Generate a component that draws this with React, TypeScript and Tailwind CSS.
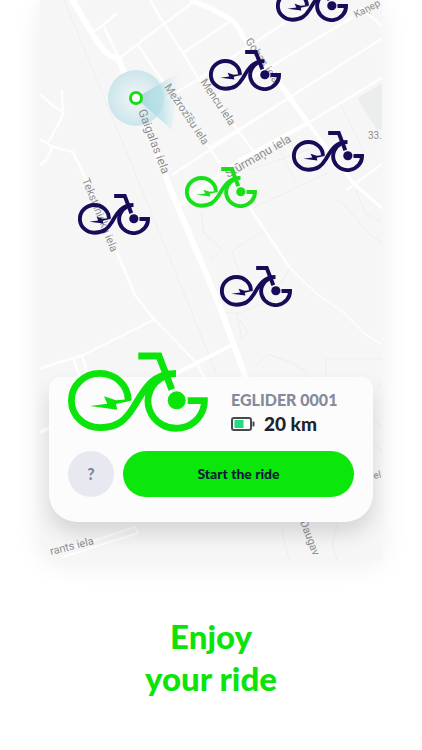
type BikeProps = {
  className?: string;
  x?: number;
  y?: number;
  width?: number;
  height?: number;
  strokeWidth?: number;
};

function Bike(props: BikeProps) {
  return (
    <svg viewBox="0 0 140 80" fill="none" stroke="currentColor" strokeWidth={6.8} aria-hidden="true" {...props}>
      <path d="M60.2 48A28.4 27.1 0 1 0 31.8 75.6C50 75.6 57.500 68 66 54.500C77 36 85 21.500 108 21.500" />
      <path d="M119.700 48.700H136.400A28.200 27.200 0 1 1 95 25" />
      <path d="M70.300 4H91L103.800 37.500" />
      <path d="M101 18 86 29 97 28Z" fill="currentColor" stroke="none" />
      <circle cx="108.700" cy="48.300" r="9" fill="currentColor" stroke="none" />
      <path d="M22 54 39.300 51.700 36 44.300 48 48.200 63 47 63 48.800 48 52 49.300 57.700Z" fill="currentColor" stroke="none" />
    </svg>
  );
}

const navyBikes = [
  [276, -19],
  [209, 50],
  [292, 131],
  [78, 194],
  [220, 266],
];

const streets: { name: string; x: number; y: number; angle: number; size: number }[] = [
  { name: "Gaigalas iela", x: 138, y: 111, angle: 69, size: 12 },
  { name: "Mežrozīšu iela", x: 164, y: 87, angle: 56, size: 11 },
  { name: "Mencu iela", x: 200, y: 82, angle: 56, size: 11 },
  { name: "Gobas iela", x: 245, y: 41, angle: 56, size: 11 },
  { name: "Stūrmaņu iela", x: 228, y: 178, angle: -30, size: 12 },
  { name: "Kaņep", x: 356, y: 18, angle: -27, size: 10 },
  { name: "Tekstilnieku iela", x: 82, y: 180, angle: 68, size: 11 },
  { name: "33.", x: 368, y: 139, angle: 0, size: 10 },
  { name: "el", x: 374, y: 479, angle: -12, size: 10 },
  { name: "Daugav", x: 300, y: 522, angle: 69, size: 11 },
  { name: "rants iela", x: 51, y: 555, angle: -14, size: 11 },
];

function CityMap() {
  return (
    <svg
      viewBox="40 0 342 560"
      preserveAspectRatio="xMidYMin slice"
      className="absolute inset-0 h-full w-full"
      role="img"
      aria-label="Map of nearby bikes"
    >
      <defs>
        <radialGradient id="halo">
          <stop offset="0" stopColor="#f3f5f8" />
          <stop offset="1" stopColor="#cbe6eb" />
        </radialGradient>
        <linearGradient id="beam">
          <stop offset="0" stopColor="#9dd3dc" stopOpacity="0.9" />
          <stop offset="0.6" stopColor="#b5dfe6" stopOpacity="0.7" />
          <stop offset="1" stopColor="#d5eef2" stopOpacity="0" />
        </linearGradient>
      </defs>
      <rect x="40" width="342" height="560" fill="#f6f6f6" />
      <path d="M357 98 383 83V130H377Z" fill="#eceeee" />

      <g fill="none" stroke="#eeeeee" strokeWidth="1">
        <path d="M64 0 138 180 216 372" />
        <path d="M341 105 364 152M275 140 297 184M250 170 310 149M255 207 330 172" />
        <path d="M263 231 232 251 240 275M201 213 204 233 222 249 210 260M290 268 280 284" />
        <path d="M338 201 345 205 370 235 383 243M356 190 365 213 383 223" />
        <path d="M225 313 240 313 271 300M237 314 242 340 248 332 240 320M254 367 268 354 290 362 306 371V378H344M326 376V359L383 359" />
        <path d="M378 390 383 380M373 420 383 428M372 443 383 451M281 526 289 560M338 522 332 545 337 560" />
      </g>

      <g fill="none" stroke="#fefefe" strokeWidth="2.5" strokeLinejoin="round">
        <path d="M92 33 103 25 117 13M103 25 120 60M193 2 118 59" />
        <path d="M150 0 165 25 183 53 198 78 238 130 258 158M250 208 290 268" />
        <path d="M290 268 318 295 343 312 365 334 383 345" strokeWidth="1.5" />
        <path d="M183 53 232 20M138 45 167 88 220 163M143 113 200 78 320 0M172 175 290 97 383 38" />
        <path d="M210 100 270 67 353 17M210 147 238 130 290 97M308 123 383 77M360 7 383 27M347 190 383 163" />
        <path d="M38 92 52 105 63 112M62 90 63 115 48 143M38 138 53 147 73 152 85 178 115 248 135 295 153 318 197 363 208 385M52 148 47 159 38 167" />
        <path d="M38 369 83 355 153 320M73 358 80 378M82 356 89 378" />
        <path d="M63 557 138 533 135 527 56 553" strokeWidth="2" />
      </g>
      <g fill="none" stroke="#fff" strokeLinejoin="round">
        <path d="M308 123 353 183 383 209" strokeWidth="3" />
        <path d="M308 123 240 160 180 205" strokeWidth="4" />
        <path d="M38 433 177 373 232 345" strokeWidth="4" />
        <path d="M190 0 210 8 232 20Q239 27 243 37L270 70 308 123" strokeWidth="5" />
        <path d="M71-2 92 33Q106 58 118 58L135 97 168 183 220 307 248 384" strokeWidth="6" />
      </g>

      <circle cx="136" cy="98" r="28" fill="url(#halo)" />
      <path d="M136 98 180 72 172 130Z" fill="url(#beam)" />

      <g fill="#8e8e8e" className="font-['Roboto',sans-serif]">
        {streets.map((s) => (
          <text key={s.name} fontSize={s.size} transform={`translate(${s.x} ${s.y}) rotate(${s.angle})`}>
            {s.name}
          </text>
        ))}
      </g>

      <circle cx="136" cy="98" r="5.500" fill="#fff" stroke="#18dc18" strokeWidth="3" />

      {navyBikes.map(([x, y]) => (
        <Bike key={`${x}-${y}`} x={x} y={y} width={72} height={41} strokeWidth={7.6} className="text-[#160c58]" />
      ))}
      <Bike x={185} y={167} width={72} height={41} strokeWidth={7.6} className="text-[#18e018]" />
    </svg>
  );
}

function Battery() {
  return (
    <svg viewBox="0 0 24 14" className="h-3.5 w-6" aria-hidden="true">
      <rect x="1" y="1" width="19" height="12" rx="2" fill="#fff" stroke="#45484c" strokeWidth="2" />
      <rect x="3.500" y="3" width="9" height="8" fill="#26d880" />
      <path d="M21.500 4.500h1a1 1 0 0 1 1 1v3a1 1 0 0 1-1 1h-1z" fill="#45484c" />
    </svg>
  );
}

export default function App() {
  return (
    <main className="min-h-screen overflow-hidden bg-white font-['Lato',sans-serif]">
      <section className="relative mx-10 rounded-bl-3xl bg-[#f6f6f6] pb-[38px] shadow-[0_4px_28px_rgba(0,0,0,0.07)]">
        <div className="absolute inset-0 overflow-hidden rounded-bl-3xl">
          <CityMap />
        </div>
        <div className="h-[377px]" />
        <article className="relative mx-[9px] rounded-t-xl rounded-b-[28px] bg-[#fcfcfc] px-[19px] pb-[25px] shadow-[0_12px_20px_rgba(0,0,0,0.13)]">
          <div className="flex">
            <Bike className="-mt-[25px] h-20 w-[140px] shrink-0 text-[#0be40b]" />
            <div className="ml-[23px] pt-[11px] whitespace-nowrap">
              <h2 className="text-base leading-6 font-black text-[#868a9a]">EGLIDER 0001</h2>
              <p className="flex items-center gap-[9px] text-[19px] leading-6 font-black text-[#20222c]">
                <Battery />
                20 km
              </p>
            </div>
          </div>
          <div className="mt-[15px] flex gap-[9px]">
            <button type="button" aria-label="Help" className="size-[46px] shrink-0 rounded-full bg-[#e8e9f0] text-base font-black text-[#81859a]">
              ?
            </button>
            <button type="button" className="h-[46px] flex-1 rounded-full bg-[#0be60b] text-sm font-black text-[#0b1a3c]">
              Start the ride
            </button>
          </div>
        </article>
      </section>
      <h1 className="pt-[55px] pb-12 text-center text-[33px] leading-[42px] font-black text-[#0be40b]">
        Enjoy
        <br />
        your ride
      </h1>
    </main>
  );
}
